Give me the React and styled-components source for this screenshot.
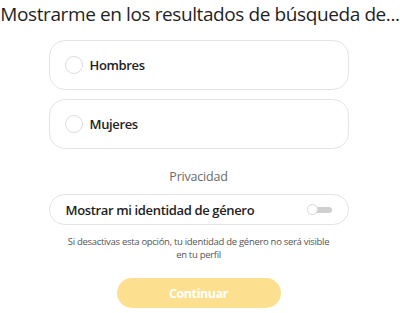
import styled, { createGlobalStyle } from "styled-components";

const GlobalStyle = createGlobalStyle`
  body {
    margin: 0;
    background: #ffffff;
    font-family: "Open Sans", "Noto Sans", sans-serif;
    color: #222;
  }
`;

export default function App() {
  return (
    <>
      <GlobalStyle />
      <StyledPage>
        <StyledTitle>Mostrarme en los resultados de búsqueda de...</StyledTitle>
        <StyledOptions>
          <StyledOption>
            <StyledRadio />
            <StyledOptionLabel>Hombres</StyledOptionLabel>
          </StyledOption>
          <StyledOption>
            <StyledRadio />
            <StyledOptionLabel>Mujeres</StyledOptionLabel>
          </StyledOption>
        </StyledOptions>
        <StyledSectionTitle>Privacidad</StyledSectionTitle>
        <StyledToggleRow>
          <StyledOptionLabel>Mostrar mi identidad de género</StyledOptionLabel>
          <StyledSwitch>
            <StyledKnob />
          </StyledSwitch>
        </StyledToggleRow>
        <StyledHint>
          Si desactivas esta opción, tu identidad de género no será visible
          <br />
          en tu perfil
        </StyledHint>
        <StyledButton disabled>Continuar</StyledButton>
      </StyledPage>
    </>
  );
}

const StyledPage = styled.div`
  display: flex;
  flex-direction: column;
  align-items: center;
  width: 400px;
  padding-right: 3px;
  box-sizing: border-box;
`;

const StyledTitle = styled.h2`
  margin: 0 -3px 0 0;
  padding-top: 1px;
  font-size: 19px;
  font-weight: 400;
  line-height: 27px;
  letter-spacing: -0.4px;
  white-space: nowrap;
  color: #1f1f1f;
`;

const StyledOptions = styled.div`
  display: flex;
  flex-direction: column;
  gap: 9px;
  margin-top: 12px;
`;

const StyledOption = styled.div`
  display: flex;
  align-items: center;
  gap: 7px;
  width: 300px;
  height: 50px;
  padding: 0 15px;
  box-sizing: border-box;
  border: 1px solid #e4e4e4;
  border-radius: 16px;
`;

const StyledRadio = styled.span`
  width: 18px;
  height: 18px;
  border: 1px solid #dcdcdc;
  border-radius: 50%;
  box-sizing: border-box;
`;

const StyledOptionLabel = styled.span`
  font-size: 13px;
  font-weight: 600;
  letter-spacing: -0.35px;
  color: #222;
`;

const StyledSectionTitle = styled.div`
  margin-top: 19px;
  font-size: 12.5px;
  letter-spacing: -0.2px;
  color: #6a6a6a;
`;

const StyledToggleRow = styled.div`
  display: flex;
  align-items: center;
  justify-content: space-between;
  width: 300px;
  height: 31px;
  margin-top: 9px;
  padding: 0 16px;
  box-sizing: border-box;
  border: 1px solid #e4e4e4;
  border-radius: 16px;
`;

const StyledSwitch = styled.span`
  position: relative;
  display: flex;
  align-items: center;
  width: 24px;
  height: 6px;
  border-radius: 3px;
  background: #cfcfcf;
`;

const StyledKnob = styled.span`
  position: absolute;
  left: -1px;
  width: 11px;
  height: 11px;
  border-radius: 50%;
  border: 1px solid #d8d8d8;
  box-sizing: border-box;
  background: #fff;
`;

const StyledHint = styled.p`
  margin: 10px 0 0;
  font-size: 9.5px;
  line-height: 13px;
  letter-spacing: -0.3px;
  text-align: center;
  color: #555;
`;

const StyledButton = styled.button`
  width: 164px;
  height: 30px;
  margin-top: 17px;
  border: none;
  border-radius: 15px;
  background: #fde08f;
  color: #fff;
  font-family: "Open Sans", "Noto Sans", sans-serif;
  font-size: 12.5px;
  font-weight: 700;
  letter-spacing: -0.4px;
`;
